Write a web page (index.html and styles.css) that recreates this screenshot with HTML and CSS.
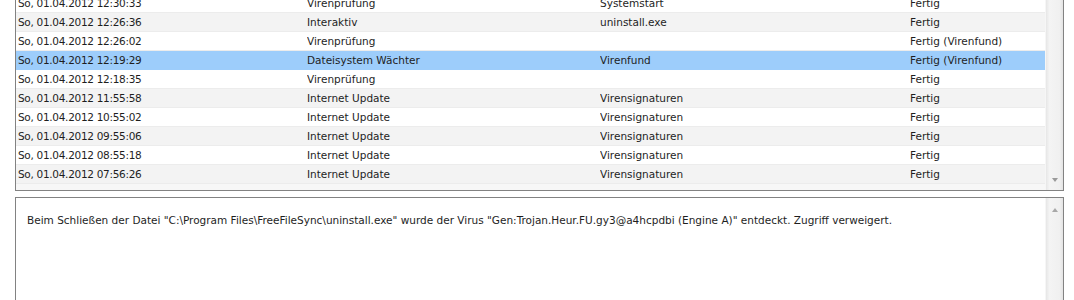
FILE: index.html
```html
<!DOCTYPE html>
<html lang="de">
<head>
    <meta charset="UTF-8">
    <title>Ereignisse</title>
    <link rel="stylesheet" href="styles.css">
</head>
<body>
    <div class="events">
        <div class="rows">
            <div class="row"><span class="c1">So, 01.04.2012 12:30:33</span><span class="c2">Virenprüfung</span><span class="c3">Systemstart</span><span class="c4">Fertig</span></div>
            <div class="row alt"><span class="c1">So, 01.04.2012 12:26:36</span><span class="c2">Interaktiv</span><span class="c3">uninstall.exe</span><span class="c4">Fertig</span></div>
            <div class="row"><span class="c1">So, 01.04.2012 12:26:02</span><span class="c2">Virenprüfung</span><span class="c3"></span><span class="c4">Fertig (Virenfund)</span></div>
            <div class="row selected"><span class="c1">So, 01.04.2012 12:19:29</span><span class="c2">Dateisystem Wächter</span><span class="c3">Virenfund</span><span class="c4">Fertig (Virenfund)</span></div>
            <div class="row"><span class="c1">So, 01.04.2012 12:18:35</span><span class="c2">Virenprüfung</span><span class="c3"></span><span class="c4">Fertig</span></div>
            <div class="row alt"><span class="c1">So, 01.04.2012 11:55:58</span><span class="c2">Internet Update</span><span class="c3">Virensignaturen</span><span class="c4">Fertig</span></div>
            <div class="row"><span class="c1">So, 01.04.2012 10:55:02</span><span class="c2">Internet Update</span><span class="c3">Virensignaturen</span><span class="c4">Fertig</span></div>
            <div class="row alt"><span class="c1">So, 01.04.2012 09:55:06</span><span class="c2">Internet Update</span><span class="c3">Virensignaturen</span><span class="c4">Fertig</span></div>
            <div class="row"><span class="c1">So, 01.04.2012 08:55:18</span><span class="c2">Internet Update</span><span class="c3">Virensignaturen</span><span class="c4">Fertig</span></div>
            <div class="row alt"><span class="c1">So, 01.04.2012 07:56:26</span><span class="c2">Internet Update</span><span class="c3">Virensignaturen</span><span class="c4">Fertig</span></div>
        </div>
        <div class="scrollbar">
            <span class="arrow down"></span>
        </div>
    </div>

    <div class="details">
        <p class="message">Beim Schließen der Datei "C:\Program Files\FreeFileSync\uninstall.exe" wurde der Virus "Gen:Trojan.Heur.FU.gy3@a4hcpdbi (Engine A)" entdeckt. Zugriff verweigert.</p>
        <div class="scrollbar">
            <span class="arrow up"></span>
        </div>
    </div>
</body>
</html>
```

FILE: styles.css
```css
body {
    margin: 0;
    padding: 0 10px 0 15px;
    background: #ffffff;
    font-family: "DejaVu Sans", sans-serif;
    font-size: 10.5px;
    color: #1e1e1e;
    overflow: hidden;
}
.events {
    display: flex;
    margin-top: -7px;
    height: 196px;
    border: 1px solid #828282;
    background: #f7f7f7;
}
.rows {
    flex: 1;
    padding-bottom: 4px;
    background: #f7f7f7;
}
.row {
    display: flex;
    height: 19px;
    align-items: center;
    background: #ffffff;
    border-bottom: 1px solid #ececec;
    box-sizing: border-box;
}
.row.alt {
    background: #f3f3f3;
}
.row.selected {
    background: #9dcdfb;
    border-bottom-color: #9dcdfb;
}
.row span {
    white-space: nowrap;
    overflow: hidden;
}
.c1 {
    width: 289px;
    padding-left: 2px;
    letter-spacing: -0.3px;
}
.c2 {
    width: 293px;
}
.c3 {
    width: 310px;
}
.c4 {
    flex: 1;
}
.scrollbar {
    width: 17px;
    display: flex;
    flex-direction: column;
    align-items: center;
    background: linear-gradient(to right, #e6e6e6, #f4f4f4 20%, #f0f0f0 80%, #e3e3e3);
    border-left: 1px solid #f6f6f6;
}
.events .scrollbar {
    justify-content: flex-end;
    padding-bottom: 8px;
}
.arrow {
    width: 0;
    height: 0;
    border-left: 3.5px solid transparent;
    border-right: 3.5px solid transparent;
}
.arrow.down {
    border-top: 4px solid #9a9a9a;
}
.arrow.up {
    border-bottom: 4px solid #a8a8a8;
    margin-top: 10px;
}
.details {
    display: flex;
    margin-top: 6px;
    height: 103px;
    border: 1px solid #828282;
    background: #ffffff;
}
.message {
    flex: 1;
    margin: 0;
    padding: 15px 11px;
    line-height: 14px;
}
```
